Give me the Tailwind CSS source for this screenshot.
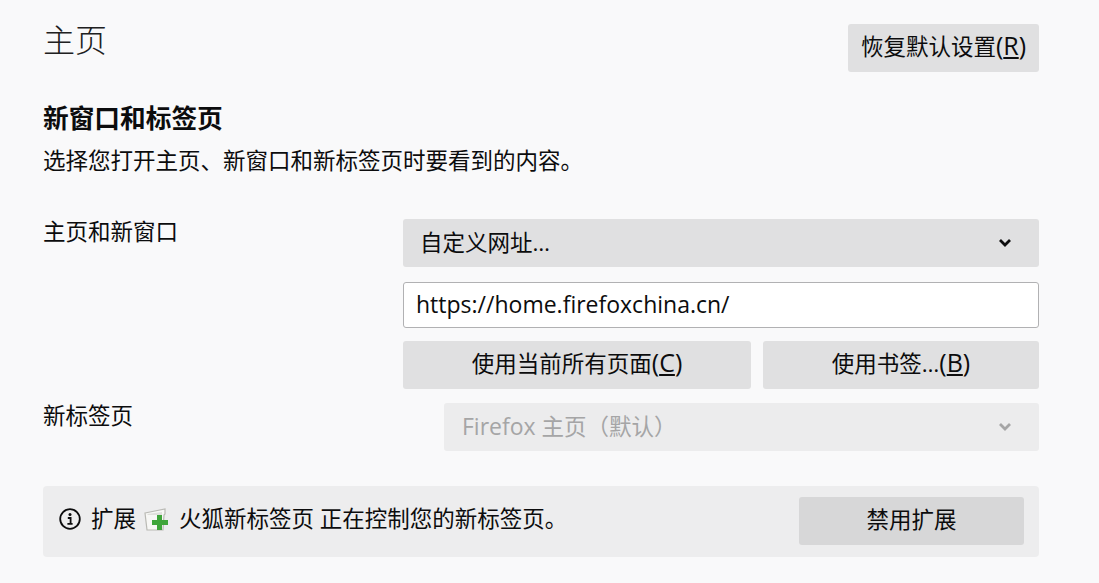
<!DOCTYPE html>
<html lang="zh-CN">
<head>
    <meta charset="UTF-8">
    <script src="https://cdn.jsdelivr.net/npm/@tailwindcss/browser@4"></script>
    <title>主页</title>
</head>
<body class="bg-[#f9f9fa] text-[#0c0c0d] font-['Open_Sans','Noto_Sans_CJK_SC',sans-serif] text-[22.5px] leading-[30px] overflow-hidden">
    <main class="w-[996px] ml-[43px] h-[583px]">
        <div class="flex justify-between pt-[24px] h-[72px]">
            <h1 class="text-[32px] leading-[36px] -mt-[2px] text-[#202020] font-light">主页</h1>
            <button class="w-[191px] h-[48px] pb-[2px] bg-[#e0e0e1] rounded-[3px] whitespace-nowrap">恢复默认设置<span class="text-[25px] leading-none">(<u>R</u>)</span></button>
        </div>

        <h2 class="text-[25.7px] leading-[32px] font-bold mt-[31px]">新窗口和标签页</h2>
        <p class="mt-[11px]">选择您打开主页、新窗口和新标签页时要看到的内容。</p>

        <div class="flex mt-[43px]">
            <div class="w-[360px] -mt-[2px]">主页和新窗口</div>
            <div class="w-[636px] flex flex-col">
                <div class="h-[48px] bg-[#e0e0e1] rounded-[3px] flex items-center justify-between pl-[18px] pr-[27px]">
                    <span class="-ml-[1px] -mt-[1px]">自定义网址…</span>
                    <svg class="w-[14px] h-[10px]" viewBox="0 0 14 10" fill="none" stroke="#0c0c0d" stroke-width="2.8"><path d="M2 2l5 5 5-5"/></svg>
                </div>
                <input class="mt-[15px] h-[46px] pb-[2px] bg-white border border-[#b1b1b3] rounded-[3px] pl-[12px] outline-none text-[#0c0c0d] text-[23px]" value="https://home.firefoxchina.cn/">
                <div class="flex gap-[12px] mt-[13px]">
                    <button class="w-[348px] h-[48px] pb-[2px] bg-[#e0e0e1] rounded-[3px]">使用当前所有页面<span class="text-[25px] leading-none">(<u>C</u>)</span></button>
                    <button class="w-[276px] h-[48px] pb-[2px] bg-[#e0e0e1] rounded-[3px]">使用书签…<span class="text-[25px] leading-none">(<u>B</u>)</span></button>
                </div>
            </div>
        </div>

        <div class="flex mt-[14px]">
            <div class="w-[401px] -mt-[2px]">新标签页</div>
            <div class="w-[595px] h-[48px] pb-[2px] bg-[#ececed] rounded-[3px] flex items-center justify-between pl-[18px] pr-[27px] text-[#a5a5a6]">
                <span><span class="text-[23px]">Firefox</span> 主页（默认）</span>
                <svg class="w-[14px] h-[10px] mt-[2px]" viewBox="0 0 14 10" fill="none" stroke="#a5a5a6" stroke-width="2.8"><path d="M2 2l5 5 5-5"/></svg>
            </div>
        </div>

        <div class="mt-[35px] h-[71px] bg-[#ededee] rounded-[4px] flex items-center pl-[16px] pr-[15px]">
            <svg class="w-[22px] h-[22px] shrink-0 -mt-[5px]" viewBox="0 0 22 22" fill="none">
                <circle cx="11" cy="11" r="9.8" stroke="#0c0c0d" stroke-width="1.8"/>
                <circle cx="11" cy="6.6" r="1.5" fill="#0c0c0d"/>
                <path d="M8.8 10h2.8v5.4M8.4 15.8h5.2" stroke="#0c0c0d" stroke-width="1.8"/>
            </svg>
            <span class="ml-[10px] -mt-[5px]">扩展</span>
            <svg class="w-[27px] h-[24px] ml-[8px] -mt-[4px] shrink-0" viewBox="0 0 27 24">
                <path d="M1 5l20-4v5l-1 1-1 15H3z" fill="#f7f7f5" stroke="#b9b9b4" stroke-width="1.2"/>
                <path d="M3 6l15-2v3H4z" fill="#e0e0dc"/>
                <path d="M13 7h5v5h6v5h-6v5h-5v-5H8v-5h5z" fill="#3fa53a"/>
            </svg>
            <span class="ml-[8px] -mt-[5px] whitespace-nowrap">火狐新标签页 正在控制您的新标签页。</span>
            <button class="ml-auto w-[225px] h-[48px] mb-[2px] pb-[1px] bg-[#d7d7d8] rounded-[3px]">禁用扩展</button>
        </div>
    </main>
</body>
</html>
